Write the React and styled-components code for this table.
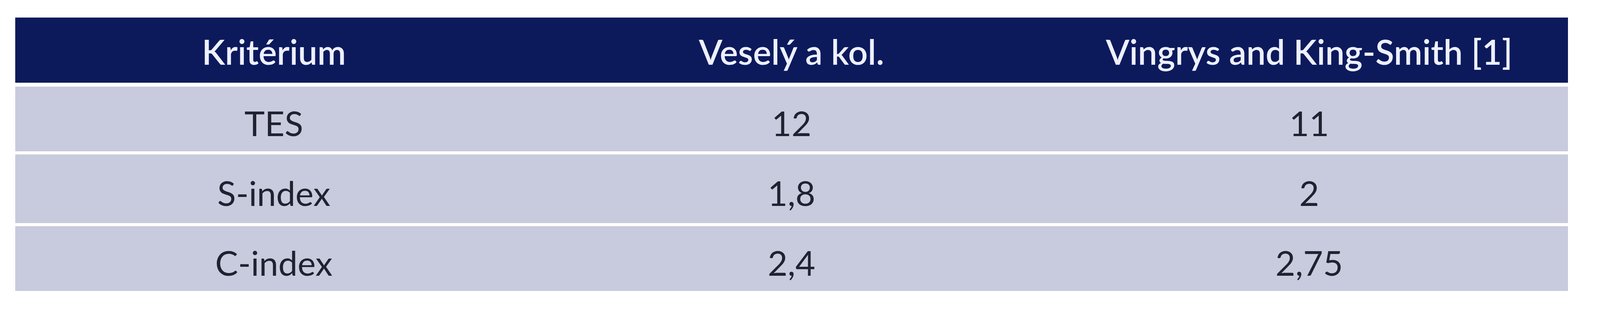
import React from "react";
import styled, { createGlobalStyle } from "styled-components";

const GlobalStyle = createGlobalStyle`
  html, body {
    margin: 0;
    padding: 0;
    background: #ffffff;
  }
  body {
    font-family: Lato, "Open Sans", "Liberation Sans", sans-serif;
  }
`;

const rows = [
  { label: "TES", ours: "12", ref: "11", height: 166 },
  { label: "S-index", ours: "1,8", ref: "2", height: 176 },
  { label: "C-index", ours: "2,4", ref: "2,75", height: 166 },
];

function App() {
  return (
    <Page>
      <GlobalStyle />
      <Table>
        <HeadRow>
          <HeadCell>Kritérium</HeadCell>
          <HeadCell>Veselý a kol.</HeadCell>
          <HeadCell>Vingrys and King-Smith [1]</HeadCell>
        </HeadRow>
        {rows.map((row) => (
          <BodyRow key={row.label} h={row.height}>
            <Cell>{row.label}</Cell>
            <Cell>{row.ours}</Cell>
            <Cell>{row.ref}</Cell>
          </BodyRow>
        ))}
      </Table>
    </Page>
  );
}

export default App;

// the table stretches with the window, rows keep their heights
const Page = styled.div`
  height: 800px;
  padding: 45px 2% 0 0.94%;
  box-sizing: border-box;
  background: #ffffff;
  overflow: hidden;
`;

const Table = styled.div`
  width: 100%;
  display: flex;
  flex-direction: column;
  gap: 8px;
`;

const HeadRow = styled.div`
  height: 167px;
  margin-bottom: 2px;
  display: grid;
  grid-template-columns: repeat(3, 1fr);
  background: #0c1a5c;
  box-shadow: 0 3px 0 #eaf4f8;
`;

const HeadCell = styled.div`
  display: flex;
  align-items: center;
  justify-content: center;
  padding-top: 6px;
  color: #eef0ff;
  font-size: 88px;
  font-weight: 600;
  white-space: nowrap;
`;

const BodyRow = styled.div`
  height: ${(p) => p.h}px;
  display: grid;
  grid-template-columns: repeat(3, 1fr);
  background: #c8cadd;
`;

const Cell = styled.div`
  display: flex;
  align-items: center;
  justify-content: center;
  padding-top: 20px;
  box-sizing: border-box;
  color: #1f2230;
  font-size: 88px;
  font-weight: 400;
  white-space: nowrap;
`;
